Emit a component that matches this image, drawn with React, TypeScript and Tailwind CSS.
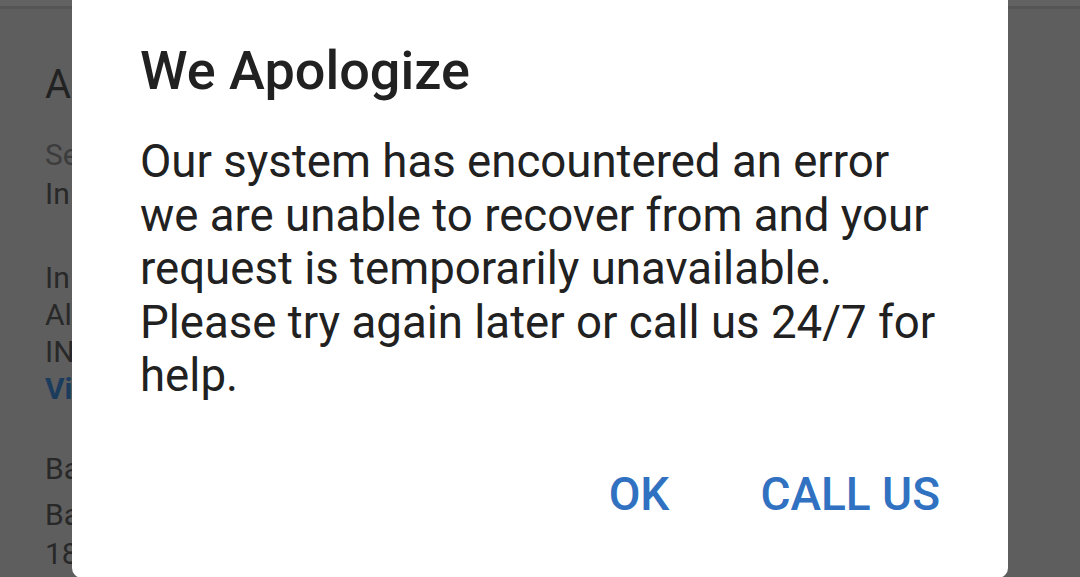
import React from "react";

export default function App() {
  return (
    <div className="relative h-[577px] w-[1080px] overflow-hidden bg-[#5e5e5e] font-['Roboto',sans-serif]">
      <div className="h-[9px] border-b-[3px] border-[#565656] bg-[#626262]" />
      <div className="flex w-[72px] flex-col overflow-hidden whitespace-nowrap pl-[45px] text-[30px] text-[#282828]">
        <div className="mt-[52px] text-[40px] leading-[48px] text-[#222222]">Ac</div>
        <div className="mt-[26px] leading-[39px] text-[#3c3c3c]">Se</div>
        <div className="leading-[39px]">In</div>
        <div className="mt-[46px] leading-[37px]">In</div>
        <div className="leading-[37px]">Al</div>
        <div className="leading-[37px]">IN</div>
        <div className="font-bold leading-[37px] text-[#1c3c5e]">Vi</div>
        <div className="mt-[43px] leading-[37px]">Ba</div>
        <div className="mt-[8px] leading-[39px]">Ba</div>
        <div className="leading-[39px]">18</div>
      </div>

      <div className="absolute left-[72px] top-[-42px] w-[936px] rounded-[10px] bg-white pb-[57px] pl-[68px] pr-[58px] pt-[82px]">
        <h1 className="text-[54px] font-medium leading-[62px] text-[#212121]">We Apologize</h1>
        <p className="mt-[33px] text-[45.6px] leading-[53.5px] text-[#212121]">
          Our system has encountered an error we are unable to recover from and your request is temporarily unavailable. Please try again later or call us 24/7 for help.
        </p>
        <div className="mt-[64px] flex justify-end gap-[91px] pr-[10px]">
          <button className="text-[46px] font-medium leading-[54px] text-[#3171c1]">OK</button>
          <button className="text-[46px] font-medium leading-[54px] text-[#3171c1]">CALL US</button>
        </div>
      </div>
    </div>
  );
}
